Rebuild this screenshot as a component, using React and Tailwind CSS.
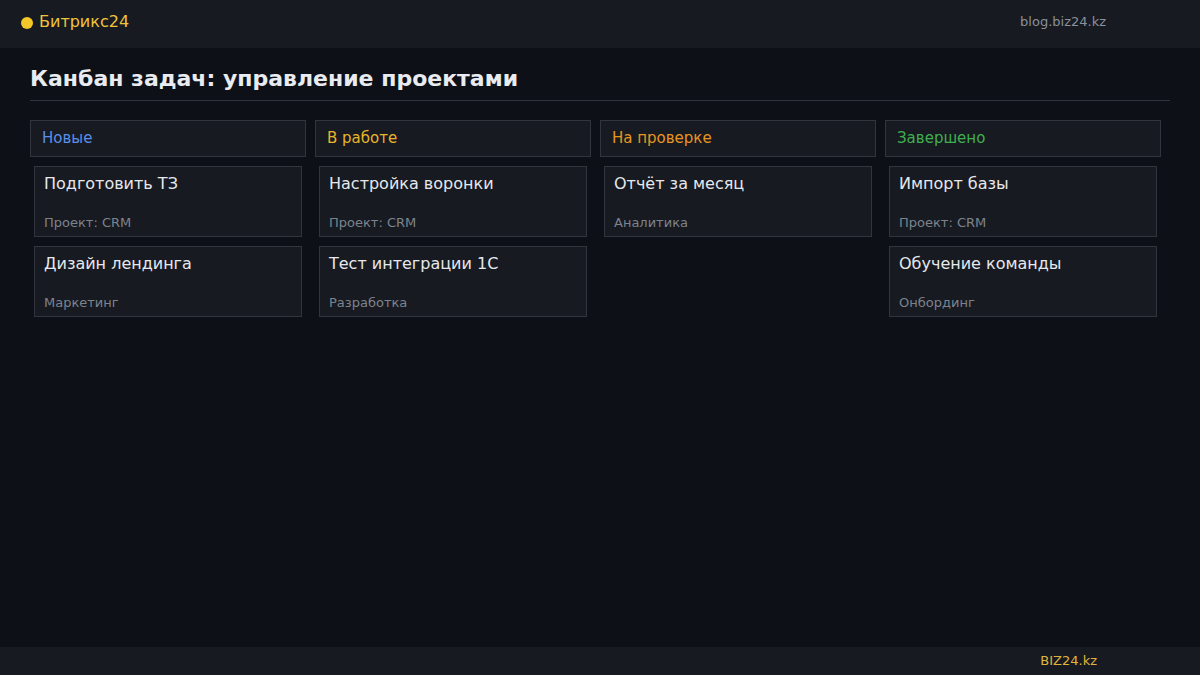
import React from 'react';

const columns = [
  {
    title: 'Новые',
    color: 'text-[#5b8fe8]',
    cards: [
      { name: 'Подготовить ТЗ', meta: 'Проект: CRM' },
      { name: 'Дизайн лендинга', meta: 'Маркетинг' },
    ],
  },
  {
    title: 'В работе',
    color: 'text-[#e6b52a]',
    cards: [
      { name: 'Настройка воронки', meta: 'Проект: CRM' },
      { name: 'Тест интеграции 1С', meta: 'Разработка' },
    ],
  },
  {
    title: 'На проверке',
    color: 'text-[#e8951f]',
    cards: [{ name: 'Отчёт за месяц', meta: 'Аналитика' }],
  },
  {
    title: 'Завершено',
    color: 'text-[#3fae4f]',
    cards: [
      { name: 'Импорт базы', meta: 'Проект: CRM' },
      { name: 'Обучение команды', meta: 'Онбординг' },
    ],
  },
];

export default function App() {
  return (
    <div className="flex h-[675px] flex-col bg-[#0d1017] font-['DejaVu_Sans',sans-serif]">
      {/* Header */}
      <header className="flex h-12 shrink-0 items-center justify-between bg-[#171a21] pb-[4px] pl-[21px]">
        <div className="flex items-center gap-[6px]">
          <span className="mt-[1px] h-3 w-3 rounded-full bg-[#f5c829]" />
          <span className="text-[16px] text-[#f0c43a]">Битрикс24</span>
        </div>
        <span className="mr-[94px] text-[13px] text-[#8a919c]">blog.biz24.kz</span>
      </header>

      {/* Main */}
      <main className="flex-1 px-[30px]">
        <h1 className="border-b border-[#2e333c] pt-[18px] pb-[8px] text-[22px] leading-[26px] font-bold text-[#e8ebf0]">
          Канбан задач: управление проектами
        </h1>

        <div className="mt-[19px] grid grid-cols-[276px_276px_276px_276px] gap-[9px]">
          {columns.map((col) => (
            <div key={col.title} className="flex flex-col gap-[9px]">
              <div className="flex h-[37px] items-center border border-[#30353e] bg-[#171a21] px-[11px]">
                <span className={`text-[15px] ${col.color}`}>{col.title}</span>
              </div>
              {col.cards.map((card) => (
                <div
                  key={card.name}
                  className="mx-[4px] flex h-[71px] flex-col justify-between border border-[#30353e] bg-[#171a21] px-[9px] pt-[5px] pb-[4px]"
                >
                  <span className="text-[16px] text-[#e6e8ec]">{card.name}</span>
                  <span className="text-[13px] text-[#7d838d]">{card.meta}</span>
                </div>
              ))}
            </div>
          ))}
        </div>
      </main>

      {/* Footer */}
      <footer className="flex h-7 shrink-0 items-center justify-end bg-[#171a21] pr-[103px]">
        <span className="text-[13px] text-[#e0b43a]">BIZ24.kz</span>
      </footer>
    </div>
  );
}
